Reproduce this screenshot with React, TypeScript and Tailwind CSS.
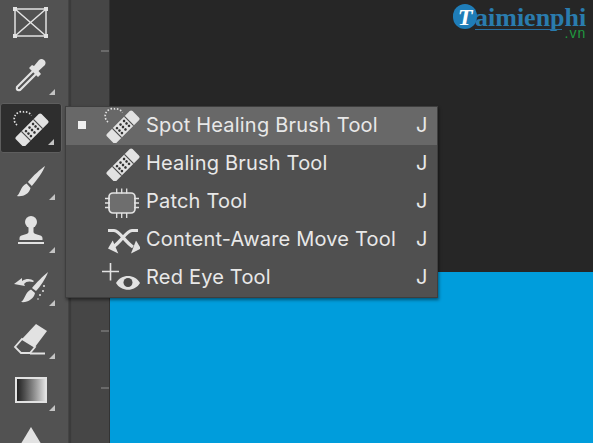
import React from 'react';

const ICON = '#e2e2e2';

const Bandage = ({ spot = false }: { spot?: boolean }) => (
  <svg width="36" height="36" viewBox="0 0 36 36" fill="none">
    {spot && (
      <path d="M4 15 A7.500 7.500 0 0 1 11 2 A7.500 7.500 0 0 1 18.500 5.500" stroke={ICON} strokeWidth="1.700" strokeDasharray="1.500 1.700" />
    )}
    <g transform="rotate(-45 19 20)">
      <rect x="1" y="13.500" width="36" height="13" rx="2" fill={ICON} />
      <path d="M10.500 13.500v13M27.500 13.500v13" stroke="#4a4a4a" strokeWidth="1.200" />
      {[14, 19, 24].map((x) =>
        [16.500, 20, 23.500].map((y) => <circle key={`${x}-${y}`} cx={x} cy={y} r="1.300" fill="#333" />),
      )}
    </g>
  </svg>
);

const Corner = () => (
  <span className="absolute right-[7px] bottom-[7px] w-0 h-0 border-l-[6px] border-b-[6px] border-l-transparent border-b-[#c4c4c4]" />
);

const FrameIcon = () => (
  <svg width="36" height="36" viewBox="0 0 36 36" fill="none" stroke={ICON} strokeWidth="1.500">
    <rect x="2" y="5" width="31" height="27" />
    <path d="M2 5l31 27M33 5L2 32" />
    {[[2, 5], [33, 5], [2, 32], [33, 32]].map(([x, y]) => (
      <rect key={`${x}${y}`} x={x - 2} y={y - 2} width="4" height="4" fill={ICON} stroke="none" />
    ))}
  </svg>
);

const DropperIcon = () => (
  <svg width="36" height="36" viewBox="0 0 36 36" fill="none">
    <path d="M20 14 L4 30 Q3 34 7 33 L23 17" stroke={ICON} strokeWidth="2.200" />
    <path d="M16 11 L25 20 L28 17 L25.500 14 L32 8 A4 4 0 0 0 26 3 L21 9 L19 8 Z" fill={ICON} />
  </svg>
);

const BrushIcon = () => (
  <svg width="36" height="36" viewBox="0 0 36 36" fill={ICON}>
    <g transform="translate(3 2) scale(0.88 1)">
      <path d="M33 1 C31 6 24 15 18 21 L13.500 17 C19 11 28 4 33 1 Z" />
      <path d="M12 18.500 L16.500 23 C15 29 8 32 1 31 C5 29 5 21 12 18.500 Z" />
    </g>
  </svg>
);

const StampIcon = () => (
  <svg width="36" height="36" viewBox="0 0 36 36" fill={ICON}>
    <circle cx="18" cy="6" r="6" />
    <path d="M15.500 10h5v6c0 3 9 2 9 6v2H6.500v-2c0-4 9-3 9-6z" />
    <rect x="5" y="26" width="26" height="2" />
  </svg>
);

const HistoryBrushIcon = () => (
  <svg width="36" height="36" viewBox="0 0 36 36" fill={ICON}>
    <g transform="translate(0 2)">
      <path d="M35 2 C33 8 27 17 23 21 L19 18 C23 13 30 6 35 2 Z" />
      <path d="M18 19.500 L22 23 C21 29 14 33 8 32 C12 30 12 22 18 19.500 Z" />
      <path d="M1 14 L9 8 L9 11 C14 8 18 9 21 11 L20 12 C17 11 13 11 11 14 L12 16 Z" />
      <circle cx="27" cy="25" r="1" />
      <circle cx="30" cy="21" r="1" />
      <circle cx="31" cy="16" r="1" />
      <circle cx="25" cy="29" r="0.800" />
    </g>
  </svg>
);

const EraserIcon = () => (
  <svg width="36" height="36" viewBox="0 0 36 36" fill="none">
    <g transform="translate(1 2)">
      <path d="M22 1 L33 8 L21 24 L8 16 Z" fill={ICON} />
      <path d="M8 16 L21 24 L16 30 H7 L1 24 Z" stroke={ICON} strokeWidth="1.800" />
      <path d="M16 30.500 H31" stroke={ICON} strokeWidth="2" />
    </g>
  </svg>
);

const GradientIcon = () => (
  <div className="w-[32px] h-[26px] mb-1 border-2 border-[#e2e2e2] bg-gradient-to-r from-[#222222] to-[#dddddd]" />
);

const PenIcon = () => (
  <svg width="36" height="36" viewBox="0 0 36 36" fill={ICON}>
    <path d="M18 0 L30 20 H6 Z" />
  </svg>
);

const PatchIcon = () => (
  <svg width="36" height="36" viewBox="0 0 36 36" fill="none">
    <rect x="5" y="10" width="26" height="20" rx="4" fill="#6e6e6e" stroke={ICON} strokeWidth="1.700" />
    <path d="M12.700 5.500v5M17.700 5.500v5M22.700 5.500v5M12.700 30v5M17.700 30v5M22.700 30v5M1 15.500h5M1 20h5M1 24.500h5M30 15.500h5M30 20h5M30 24.500h5" stroke={ICON} strokeWidth="1.300" />
  </svg>
);

const MoveIcon = () => (
  <svg width="36" height="36" viewBox="0 0 36 36" fill="none" stroke={ICON} strokeWidth="3.200">
    <path d="M4 9.500 H10 C16 10 20 20 29 26" />
    <path d="M34 9.500 H28 C22 10 18 20 9 26" />
    <path d="M37 27.500 L32 19.500 L27 32.500 Z" fill={ICON} stroke="none" />
    <path d="M4 27.500 L8.700 19.500 L14.300 32.500 Z" fill={ICON} stroke="none" />
  </svg>
);

const RedEyeIcon = () => (
  <svg width="40" height="36" viewBox="0 0 40 36" fill="none">
    <path d="M8.500 4v17.500M0 12.500h17" stroke={ICON} strokeWidth="1.600" />
    <path d="M14 24 C19 14.500 33 14.500 38 24 C33 33 19 33 14 24 Z" fill={ICON} />
    <circle cx="26" cy="23.500" r="4.500" fill="#4a4a4a" />
  </svg>
);

const tools = [
  { icon: <FrameIcon /> },
  { icon: <DropperIcon />, more: true },
  { icon: <Bandage spot />, more: true, active: true },
  { icon: <BrushIcon />, more: true },
  { icon: <StampIcon />, more: true },
  { icon: <HistoryBrushIcon />, more: true },
  { icon: <EraserIcon />, more: true },
  { icon: <GradientIcon />, more: true },
  { icon: <PenIcon />, more: true },
];

const menuItems = [
  { name: 'Spot Healing Brush Tool', icon: <Bandage spot />, checked: true },
  { name: 'Healing Brush Tool', icon: <Bandage /> },
  { name: 'Patch Tool', icon: <PatchIcon /> },
  { name: 'Content-Aware Move Tool', icon: <MoveIcon /> },
  { name: 'Red Eye Tool', icon: <RedEyeIcon /> },
];

const Tick = () => <div className="w-[8px] h-[2px] bg-[#6a6a6a] ml-auto" />;

export default function App() {
  return (
    <div className="relative flex w-[593px] h-[443px] overflow-hidden bg-[#262626] font-['Inter','Liberation_Sans',sans-serif]">
      {/* tool strip */}
      <div className="flex flex-col shrink-0 w-[68px] h-[447px] bg-[#525252] -mt-1">
        {tools.map((tool, i) => (
          <div
            key={i}
            className={`relative shrink-0 flex items-center justify-center w-[62px] ${
              tool.active
                ? 'h-[50.800px] my-px bg-[#2e2e2e] border border-[#5e5e5e] rounded-[3px]'
                : 'h-[52.800px]'
            }`}
          >
            {tool.icon}
            {tool.more && <Corner />}
          </div>
        ))}
      </div>
      <div className="shrink-0 w-[4px] h-full bg-[#3b3b3b] border-x border-[#444444]" />

      {/* ruler */}
      <div className="flex flex-col shrink-0 w-[38px] h-full bg-[#464646] border-r border-[#333333] pt-[50px]">
        <Tick />
        <div className="h-[278px]" />
        <Tick />
        <div className="h-[55px]" />
        <Tick />
      </div>

      {/* canvas */}
      <div className="flex flex-col flex-1 h-full">
        <div className="h-[272px] bg-[#262626]" />
        <div className="flex-1 bg-[#009ddc]" />
      </div>

      {/* flyout */}
      <div className="absolute left-[65px] top-[106px] w-[373px] bg-[#505050] border border-[#3e3e3e] shadow-[1px_2px_3px_rgba(0,0,0,0.45)]">
        {menuItems.map((item) => (
          <div
            key={item.name}
            className={`flex items-center h-[38px] pb-[3px] text-[20px] tracking-[0.2px] text-[#e8e8e8] ${item.checked ? 'bg-[#686868]' : ''}`}
          >
            <span className="flex justify-center w-[32px] shrink-0">
              {item.checked && <span className="w-[8px] h-[8px] bg-[#f0f0f0]" />}
            </span>
            <span className="flex justify-center w-[48px] shrink-0">{item.icon}</span>
            <span className="flex-1 whitespace-nowrap">{item.name}</span>
            <span className="w-[21px] shrink-0">J</span>
          </div>
        ))}
      </div>

      {/* watermark logo */}
      <div className="absolute left-[453px] top-[4px] flex items-start">
        <div className="flex items-center justify-center w-[24px] h-[25px] rounded-full bg-[#1f7db8] text-white text-[24px] leading-none font-bold font-['Liberation_Serif',serif] italic">
          T
        </div>
        <div className="relative -ml-[2px] h-[34px]">
          <div className="h-[25px] whitespace-nowrap text-[#2a7cae] text-[26px] leading-[28px] font-bold font-['Liberation_Serif',serif]">
            aimienphi
          </div>
          <div className="absolute left-0 right-[24px] top-[25px] h-px bg-[#2a6f9f]" />
          <div className="absolute right-0 top-[21px] text-[#1f9a3f] text-[14px] leading-[16px] font-['Liberation_Sans',sans-serif] tracking-[1px]">
            .vn
          </div>
        </div>
      </div>
    </div>
  );
}
